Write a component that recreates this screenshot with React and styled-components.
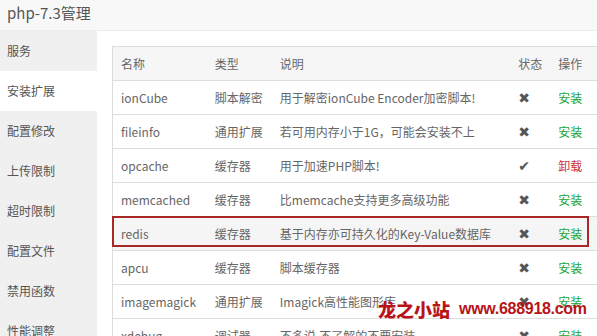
import React from "react";
import styled, { createGlobalStyle } from "styled-components";

const Global = createGlobalStyle`
  body {
    margin: 0;
    overflow: hidden;
    background: #fff;
    font-family: "Noto Sans CJK SC", "Noto Sans", sans-serif;
  }
`;

const rows = [
  { name: "ionCube", type: "脚本解密", desc: "用于解密ionCube Encoder加密脚本!", on: false },
  { name: "fileinfo", type: "通用扩展", desc: "若可用内存小于1G，可能会安装不上", on: false },
  { name: "opcache", type: "缓存器", desc: "用于加速PHP脚本!", on: true },
  { name: "memcached", type: "缓存器", desc: "比memcache支持更多高级功能", on: false },
  { name: "redis", type: "缓存器", desc: "基于内存亦可持久化的Key-Value数据库", on: false, hover: true },
  { name: "apcu", type: "缓存器", desc: "脚本缓存器", on: false },
  { name: "imagemagick", type: "通用扩展", desc: "Imagick高性能图形库", on: false },
  { name: "xdebug", type: "调试器", desc: "不多说,不了解的不要安装", on: false },
];

const menu = ["服务", "安装扩展", "配置修改", "上传限制", "超时限制", "配置文件", "禁用函数", "性能调整"];

export default function App() {
  return (
    <Page>
      <Global />
      <Header>php-7.3管理</Header>
      <Body>
        <Sidebar>
          {menu.map((m, i) => (
            <MenuItem key={m} active={i === 1}>{m}</MenuItem>
          ))}
        </Sidebar>
        <Main>
          <TableWrap>
            <Table>
              <colgroup>
                <col style={{ width: 94 }} />
                <col style={{ width: 65 }} />
                <col style={{ width: 238 }} />
                <col style={{ width: 40 }} />
                <col style={{ width: 60 }} />
              </colgroup>
              <thead>
                <tr>
                  <Th>名称</Th>
                  <Th>类型</Th>
                  <Th>说明</Th>
                  <Th>状态</Th>
                  <Th>操作</Th>
                </tr>
              </thead>
              <tbody>
                {rows.map((r) => (
                  <Row key={r.name} hover={r.hover}>
                    <Td>{r.name}</Td>
                    <Td>{r.type}</Td>
                    <Td>{r.desc}</Td>
                    <StatusTd>{r.on ? "✔" : "✖"}</StatusTd>
                    <Td><Action danger={r.on}>{r.on ? "卸载" : "安装"}</Action></Td>
                  </Row>
                ))}
              </tbody>
            </Table>
            <Mark />
          </TableWrap>
        </Main>
      </Body>
      <Watermark>
        <Cn>龙之小站</Cn>
        <Url>www.688918.com</Url>
      </Watermark>
    </Page>
  );
}

const Page = styled.div`
  position: relative;
  width: 597px;
  height: 336px;
  overflow: hidden;
  display: flex;
  flex-direction: column;
`;

const Header = styled.div`
  height: 30px;
  flex: none;
  background: #f8f8f8;
  border-bottom: 1px solid #ececec;
  color: #555;
  font-size: 15px;
  line-height: 26px;
  padding-left: 7px;
`;

const Body = styled.div`
  flex: 1;
  display: flex;
  min-height: 0;
`;

const Sidebar = styled.div`
  width: 97px;
  flex: none;
  background: #f0f0f0;
  display: flex;
  flex-direction: column;
`;

const MenuItem = styled.div`
  height: 40px;
  flex: none;
  line-height: 40px;
  padding-left: 7px;
  font-size: 12px;
  color: #555;
  background: ${(p) => (p.active ? "#fff" : "transparent")};
`;

const Main = styled.div`
  flex: 1;
  padding: 15px 0 0 15px;
  overflow: hidden;
`;

const TableWrap = styled.div`
  position: relative;
  width: 499px;
`;

const Table = styled.table`
  width: 499px;
  border-collapse: collapse;
  table-layout: fixed;
  border: 1px solid #ddd;
  font-size: 12px;
  color: #666;
`;

const Th = styled.th`
  height: 33px;
  padding: 0 8px;
  text-align: left;
  font-weight: normal;
  background: #f6f6f6;
  border-bottom: 1px solid #ddd;
  white-space: nowrap;
`;

const Row = styled.tr`
  background: ${(p) => (p.hover ? "#f5f5f5" : "#fff")};
`;

const Td = styled.td`
  height: 33px;
  padding: 0 8px;
  border-bottom: 1px solid #ddd;
  white-space: nowrap;
  overflow: hidden;
`;

const StatusTd = styled(Td)`
  color: #555;
  font-family: "DejaVu Sans", sans-serif;
  font-size: 14px;
  padding-left: 8px;
`;

const Action = styled.span`
  color: ${(p) => (p.danger ? "#cc3333" : "#20a53a")};
`;

const Mark = styled.div`
  position: absolute;
  left: 0;
  top: 170px;
  width: 477px;
  height: 31px;
  border: 2px solid #a82828;
  box-sizing: border-box;
  pointer-events: none;
`;

const Watermark = styled.div`
  position: absolute;
  left: 378px;
  top: 298px;
  display: flex;
  align-items: center;
  gap: 9px;
  white-space: nowrap;
  color: #b81418;
  font-weight: bold;
  line-height: 22px;
`;

const Cn = styled.span`
  font-family: "Noto Sans CJK SC", sans-serif;
  font-size: 18px;
  font-weight: 900;
`;

const Url = styled.span`
  font-family: "Liberation Sans", sans-serif;
  font-size: 16px;
  letter-spacing: -0.3px;
`;
